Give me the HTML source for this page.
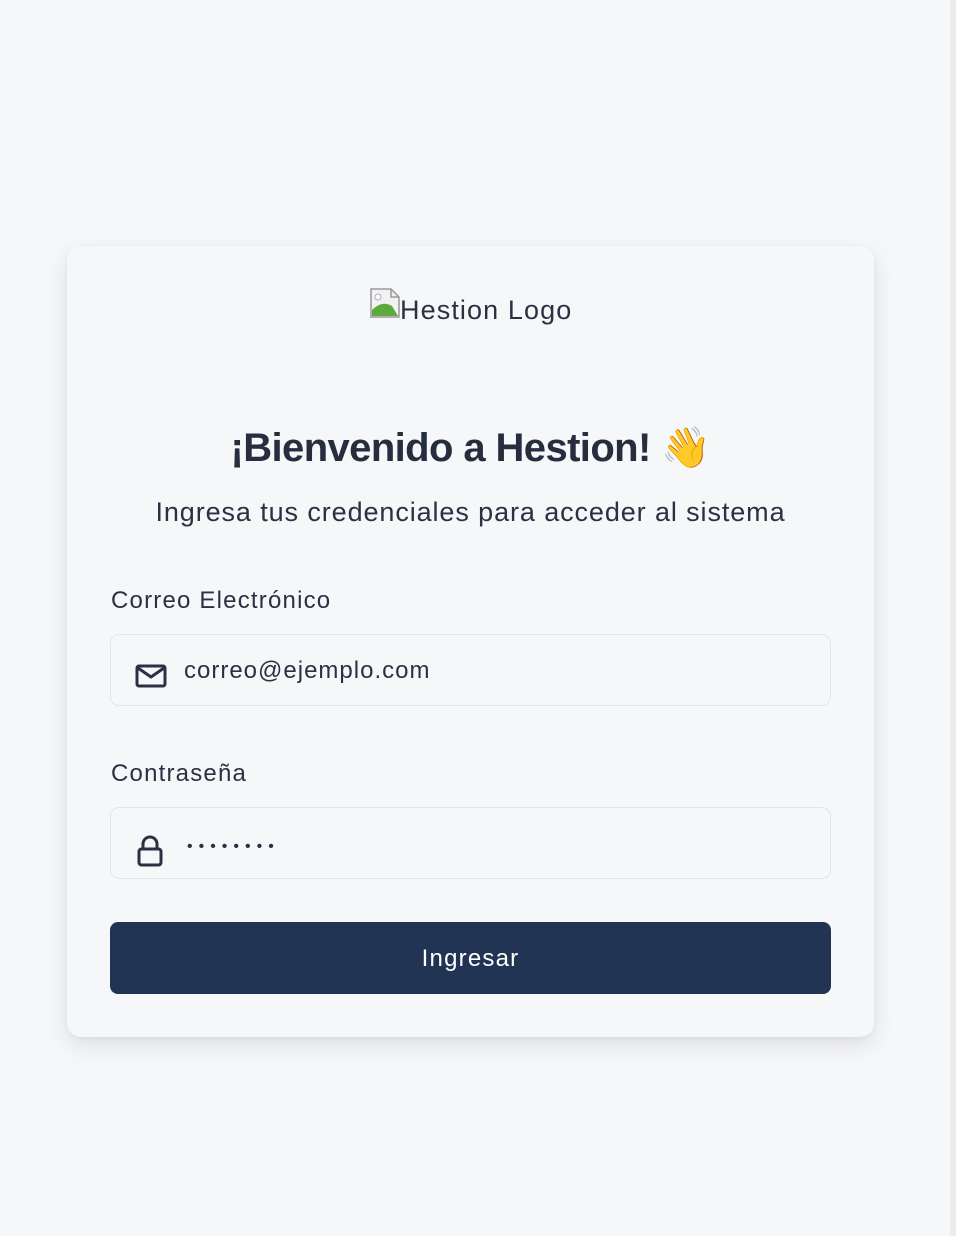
<!DOCTYPE html>
<html><head><meta charset="utf-8"><style>
*{box-sizing:border-box;margin:0;padding:0}
body{width:956px;height:1236px;background:#f6f7f9;font-family:"Liberation Sans",sans-serif;color:#2a3142;position:relative;overflow:hidden}
.sb{position:absolute;right:0;top:0;width:6px;height:1236px;background:#ececee}
.card{position:absolute;left:67px;top:246px;width:807px;height:791px;background:#f6f7f9;border-radius:14px;box-shadow:0 8px 24px rgba(0,0,0,.10),0 2px 6px rgba(0,0,0,.04)}
.logo{position:absolute;left:303px;top:42px;font-size:27px;color:#2a3142;display:flex;align-items:flex-start;letter-spacing:1.1px}
h1{position:absolute;left:0;width:807px;top:178px;text-align:center;font-size:40px;font-weight:bold;letter-spacing:-0.6px;color:#262d3e}
.sub{position:absolute;left:0;width:807px;top:251px;text-align:center;font-size:27px;color:#2a3142;letter-spacing:0.9px}
.lbl{position:absolute;left:44px;font-size:24px;color:#2a3142;letter-spacing:1.2px}
.inp{position:absolute;left:43px;width:721px;height:72px;border:1px solid #e3e5e9;border-radius:9px;background:#f6f7f9}
.inp .t{position:absolute;left:73px;top:22px;font-size:24px;color:#2a3142;letter-spacing:1px}
.inp svg{position:absolute;left:24px}
.btn{position:absolute;left:43px;top:676px;width:721px;height:72px;background:#223453;border-radius:8px;color:#fff;font-size:24px;text-align:center;line-height:74px;letter-spacing:1.2px}
</style></head><body>
<div class="sb"></div>
<div class="card">
 <div class="logo"><svg width="30" height="30" viewBox="0 0 30 30"><path d="M1 1h20l8 8v20H1z" fill="#f2f2f2" stroke="#999" stroke-width="1.5"/><path d="M21 1v8h8" fill="none" stroke="#999" stroke-width="1.5"/><path d="M2 28 L2 22 Q12 12 22 18 L28 28z" fill="#5ea83e"/><circle cx="8" cy="9" r="3" fill="#fff" stroke="#aac" stroke-width="1"/></svg><span style="margin-top:7px">Hestion Logo</span></div>
 <h1>¡Bienvenido a Hestion! <span style="font-family:'Noto Color Emoji',sans-serif;font-weight:normal">👋</span></h1>
 <div class="sub">Ingresa tus credenciales para acceder al sistema</div>
 <div class="lbl" style="top:341px">Correo Electrónico</div>
 <div class="inp" style="top:388px">
  <svg style="top:28px" width="32" height="26" viewBox="0 0 32 26"><rect x="2" y="3" width="28" height="20" rx="2" fill="none" stroke="#2a3142" stroke-width="3"/><path d="M3 5l13 9 13-9" fill="none" stroke="#2a3142" stroke-width="3" stroke-linejoin="round"/></svg>
  <div class="t">correo@ejemplo.com</div>
 </div>
 <div class="lbl" style="top:514px">Contraseña</div>
 <div class="inp" style="top:561px">
  <svg style="top:26px" width="30" height="34" viewBox="0 0 30 34"><path d="M8 15V10a7 7 0 0 1 14 0v5" fill="none" stroke="#2a3142" stroke-width="3"/><rect x="4" y="15" width="22" height="16" rx="2.5" fill="none" stroke="#2a3142" stroke-width="3"/></svg>
  <div class="t" style="left:76px;top:30px;letter-spacing:6px;font-size:16px">••••••••</div>
 </div>
 <div class="btn">Ingresar</div>
</div>
</body></html>
